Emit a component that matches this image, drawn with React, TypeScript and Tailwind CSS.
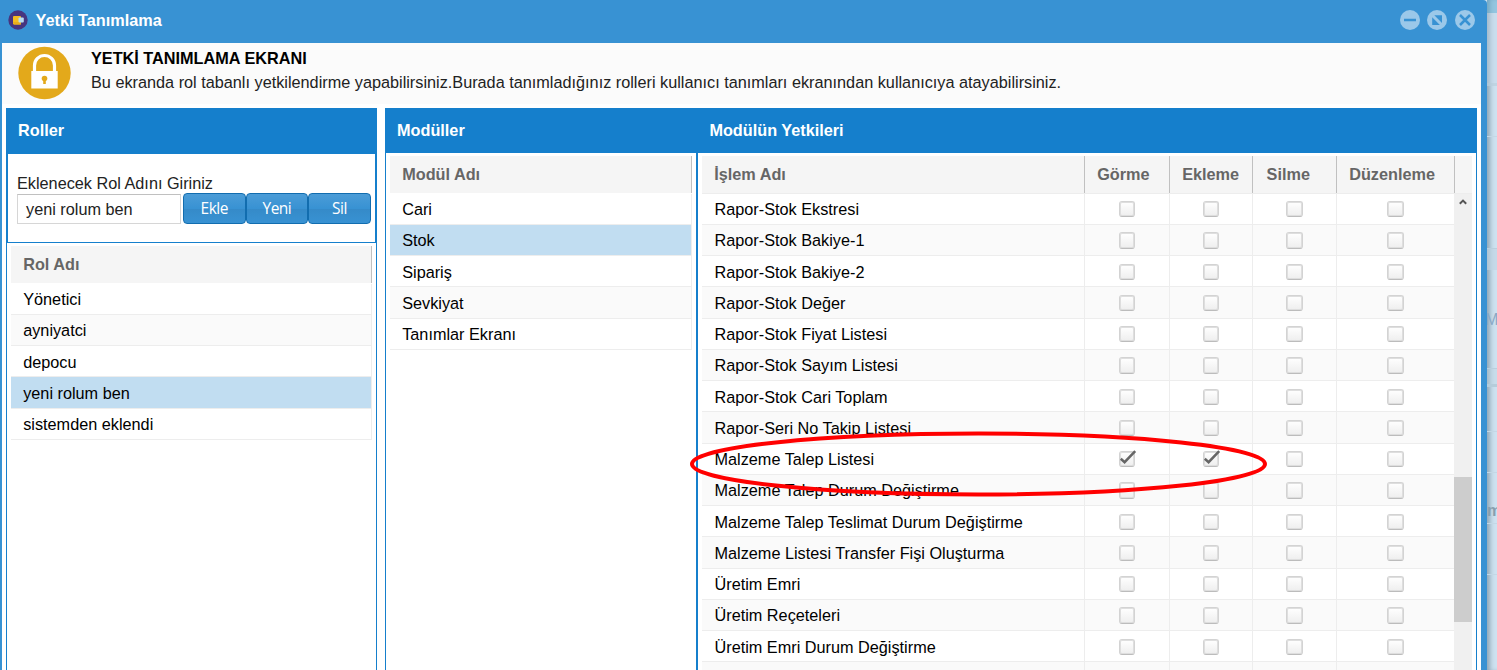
import React from "react";

const roles = ["Yönetici", "ayniyatci", "depocu", "yeni rolum ben", "sistemden eklendi"];
const modules = ["Cari", "Stok", "Sipariş", "Sevkiyat", "Tanımlar Ekranı"];
const operations = [
  "Rapor-Stok Ekstresi",
  "Rapor-Stok Bakiye-1",
  "Rapor-Stok Bakiye-2",
  "Rapor-Stok Değer",
  "Rapor-Stok Fiyat Listesi",
  "Rapor-Stok Sayım Listesi",
  "Rapor-Stok Cari Toplam",
  "Rapor-Seri No Takip Listesi",
  "Malzeme Talep Listesi",
  "Malzeme Talep Durum Değiştirme",
  "Malzeme Talep Teslimat Durum Değiştirme",
  "Malzeme Listesi Transfer Fişi Oluşturma",
  "Üretim Emri",
  "Üretim Reçeteleri",
  "Üretim Emri Durum Değiştirme",
  "",
];

function CheckBox({ checked = false }: { checked?: boolean }) {
  return (
    <span className="relative block h-[16.25px] w-[16.25px] rounded-[3px] border border-[#d3d3d3] border-b-[#bcbcbc] bg-gradient-to-b from-white to-[#eeeeee] shadow-[inset_0_0_0_1px_#dedede]">
      {checked && (
        <svg className="absolute -left-px -top-[2px] h-[17px] w-[18px]" viewBox="0 0 18 17">
          <path d="M1.8 8.8 5.6 12.2 16.2 1.2" fill="none" stroke="#666" strokeWidth="2.5" />
        </svg>
      )}
    </span>
  );
}

function ListGrid({ title, items, selected }: { title: string; items: string[]; selected: number }) {
  return (
    <div>
      <div className="flex h-[37px] items-center border-r border-[#c0c0c0] bg-[#f5f5f5] pb-[1.5px] pl-[12.2px] font-bold text-[#666]">
        {title}
      </div>
      <div className="pt-[0.6px]">
        {items.map((item, i) => (
          <div
            key={item}
            className={
              "flex h-[31.25px] items-center border-b border-r border-[#ededed] pl-[12.2px] pt-[0.8px] " +
              (i === selected ? "bg-[#c1ddf1]" : i % 2 ? "bg-[#fafafa]" : "bg-white")
            }
          >
            {item}
          </div>
        ))}
      </div>
    </div>
  );
}

function ToolButton({ label }: { label: string }) {
  return (
    <button className="flex h-[31px] w-[62.6px] items-center justify-center rounded-[4px] border border-[#126daf] bg-[linear-gradient(#4b9cd7,#3892d3_50%,#358ac8_51%,#3892d3)] pb-px font-['Open_Sans',sans-serif] text-[15.5px] font-medium tracking-[-0.5px] text-white">
      {label}
    </button>
  );
}

export default function App() {
  return (
    <div className="relative flex h-[670px] w-[1497px] overflow-hidden bg-[#cde2f0] font-['Liberation_Sans',Arial,sans-serif] text-[16.25px] leading-5 text-black">
      <div className="flex w-[1487px] shrink-0 flex-col rounded-tr-[4px] bg-[#3892d3] pl-0.5 pr-1.5">
        <header className="flex h-[43px] shrink-0 items-center pb-[3px] pl-[6px] pr-[6px]">
          <svg className="h-5 w-5" viewBox="0 0 20 20">
            <circle cx="10" cy="10" r="9.7" fill="#47357f" />
            <rect x="5" y="6" width="8" height="8.4" rx="1" fill="#f4bd20" />
            <path d="M5 12h8v2.4H6z" fill="#e8ae1e" />
            <rect x="10.5" y="7.6" width="5.3" height="4.8" rx="1" fill="#b9ddf2" />
          </svg>
          <h1 className="ml-[7.6px] text-[16.25px] font-bold text-white">Yetki Tanımlama</h1>
          <div className="ml-auto flex text-[#3892d3]">
            <svg className="mr-[7px] h-5 w-5" viewBox="0 0 20 20">
              <circle cx="10" cy="10" r="10" fill="#9bc8e9" />
              <path d="M4 10h12" stroke="currentColor" strokeWidth="2.5" />
            </svg>
            <svg className="mr-2 h-5 w-5" viewBox="0 0 20 20">
              <circle cx="10" cy="10" r="10" fill="#9bc8e9" />
              <path d="M7.3 5.2H15v7.7zM5.2 7.3V15h7.7z" fill="currentColor" />
            </svg>
            <svg className="h-5 w-5" viewBox="0 0 20 20">
              <circle cx="10" cy="10" r="10" fill="#9bc8e9" />
              <path d="m5 5 10 10M15 5 5 15" stroke="currentColor" strokeWidth="2.5" />
            </svg>
          </div>
        </header>

        <div className="flex min-h-0 flex-1 flex-col bg-white">
          <section className="flex h-[61px] shrink-0 bg-[#fbfbfb] pl-4">
            <svg className="mt-[3px] h-[54px] w-[54px]" viewBox="0 0 54 54">
              <circle cx="26.5" cy="27" r="26.2" fill="#e3a91b" />
              <path d="M16.5 26v-6.5a10 10 0 0 1 20 0V26" fill="none" stroke="white" strokeWidth="3.2" />
              <path d="M13.3 25h26.4v17.5H13.3z" fill="white" />
              <circle cx="26.5" cy="32.5" r="2.8" fill="#e3a91b" />
              <path d="M25.2 33h2.6v5h-2.6z" fill="#e3a91b" />
            </svg>
            <div className="ml-[19px] pt-[5px]">
              <h2 className="text-[16.25px] font-bold leading-5">YETKİ TANIMLAMA EKRANI</h2>
              <p className="mt-1 whitespace-nowrap text-[#222]">
                Bu ekranda rol tabanlı yetkilendirme yapabilirsiniz.Burada tanımladığınız rolleri kullanıcı tanımları
                ekranından kullanıcıya atayabilirsiniz.
              </p>
            </div>
          </section>

          <main className="mt-1 flex min-h-0 flex-1 gap-2 pl-1 pr-1">
            <section className="w-[371px] border-x border-[#157fcc]">
              <h3 className="flex h-[45px] items-center bg-[#157fcc] pb-[1.5px] pl-[11px] font-bold text-white">
                Roller
              </h3>
              <div className="h-[90px] border border-[#157fcc] pl-[9px] pt-[19px]">
                <label className="block h-5 text-[#222]">Eklenecek Rol Adını Giriniz</label>
                <div className="flex">
                  <div className="mr-0.5 mt-px flex h-[30px] w-[164px] shrink-0 items-center border border-[#d6d6d6] border-t-[#c0c0c0] pl-2 text-[#222]">
                    yeni rolum ben
                  </div>
                  <ToolButton label="Ekle" />
                  <ToolButton label="Yeni" />
                  <ToolButton label="Sil" />
                </div>
              </div>
              <div className="pl-1 pr-1 pt-[3px]">
                <ListGrid title="Rol Adı" items={roles} selected={3} />
              </div>
            </section>

            <section className="flex w-[1092px] flex-col border-x border-[#157fcc]">
              <div className="flex h-[45px] shrink-0 items-center bg-[#157fcc] pb-[1.5px] font-bold text-white">
                <h3 className="w-[312px] pl-[11px]">Modüller</h3>
                <h3 className="pl-[11.4px]">Modülün Yetkileri</h3>
              </div>
              <div className="flex min-h-0 flex-1">
                <div className="w-[312px] border-r-2 border-[#157fcc] pl-1 pr-1 pt-[3px]">
                  <ListGrid title="Modül Adı" items={modules} selected={1} />
                </div>
                <div className="flex min-w-0 flex-1 flex-col pl-1 pr-1 pt-[3px]">
                  <div className="grid h-[38px] shrink-0 grid-cols-[383px_85px_83px_84px_118px_17px] border-b border-[#ededed] bg-[#f5f5f5] font-bold text-[#666]">
                    {["İşlem Adı", "Görme", "Ekleme", "Silme", "Düzenleme"].map((h, i) => (
                      <div
                        key={h}
                        className={
                          "flex items-center border-r border-[#c0c0c0] pb-[1.5px] " +
                          (i === 3 ? "pl-[13.6px]" : "pl-[12.2px]")
                        }
                      >
                        {h}
                      </div>
                    ))}
                  </div>
                  <div className="-mt-[0.4px] flex min-h-0 flex-1">
                    <div className="w-[752px] overflow-hidden">
                      {operations.map((op, row) => (
                        <div
                          key={row}
                          className={
                            "grid h-[31.25px] grid-cols-[383px_85px_83px_84px_117px] border-b border-[#ededed] " +
                            (row % 2 ? "bg-[#fafafa]" : "bg-white")
                          }
                        >
                          <div className="flex items-center border-r border-[#ededed] pl-[12.5px] pt-[0.8px]">{op}</div>
                          {[0, 1, 2, 3].map((col) => (
                            <div
                              key={col}
                              className={
                                "flex items-center justify-center pt-[1.2px] " +
                                (col < 3 ? "border-r border-[#ededed]" : "")
                              }
                            >
                              <CheckBox checked={row === 8 && col < 2} />
                            </div>
                          ))}
                        </div>
                      ))}
                    </div>
                    <div className="flex w-[18px] flex-col items-center bg-[#f0f0f0]">
                      <svg className="mt-[4px] h-2 w-2 shrink-0" viewBox="0 0 8 8">
                        <path d="M.8 5.8 4 2.6l3.2 3.2" fill="none" stroke="#555" strokeWidth="2" />
                      </svg>
                      <div className="mt-[271px] h-[145px] w-full shrink-0 bg-[#cdcdcd]" />
                    </div>
                  </div>
                </div>
              </div>
            </section>
          </main>
        </div>
      </div>

      <aside className="flex min-w-0 flex-1 flex-col overflow-hidden shadow-[inset_5px_0_5px_-2px_#8fa5b5]">
        <div className="h-[13px] shrink-0 bg-[#5aa9cf]/50" />
        <div className="h-[70px] shrink-0 bg-[#c4d8e8]/40" />
        <div className="h-[3px] shrink-0 bg-[#b9cfdd]/70" />
        <div className="h-[51px] shrink-0 border-b border-[#c3d7e5]" />
        <div className="h-[111px] shrink-0" />
        <div className="h-[22px] shrink-0 border-t border-[#b9cfdd] bg-[#bfd4e2]/60" />
        <div className="h-[98px] shrink-0 pt-[39px] text-[#8aa9c6]">
          <span className="-ml-0.5">M</span>
        </div>
        <div className="h-[16px] shrink-0 border-t border-[#b9cfdd] bg-[#bfd4e2]/40" />
        <div className="h-[3px] shrink-0 bg-[#b5ccda]" />
        <div className="h-[45px] shrink-0 border-b border-[#c3d7e5]" />
        <div className="h-[41px] shrink-0 border-b border-[#c3d7e5] font-bold text-[#879fae]">
          <span className="block pt-[13px] leading-[80px]" />
        </div>
        <div className="h-[51px] shrink-0 border-b border-[#c3d7e5]" />
        <div className="h-[51px] shrink-0 border-b border-[#c3d7e5]" />
      </aside>
      <span className="absolute left-[1487px] top-[500px] font-bold text-[#879fae]">m</span>

      <svg className="absolute left-[688px] top-[430px] h-[70px] w-[582px]" viewBox="0 0 582 70">
        <ellipse cx="290.5" cy="34" rx="286.5" ry="30.5" fill="none" stroke="#ff0000" strokeWidth="4" />
      </svg>
    </div>
  );
}
